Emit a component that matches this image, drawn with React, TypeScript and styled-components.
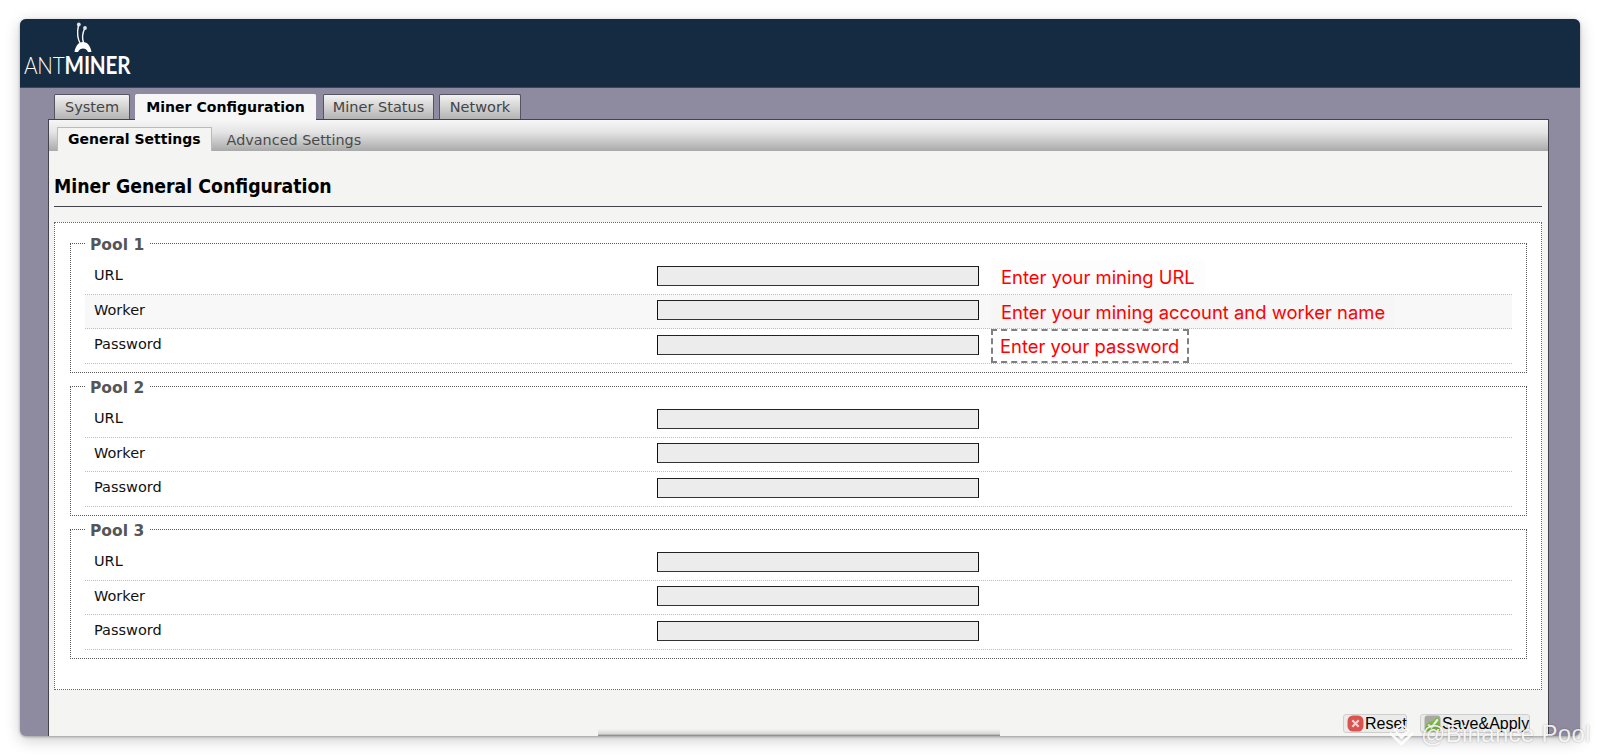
import React from "react";
import styled, { createGlobalStyle } from "styled-components";

const GlobalStyle = createGlobalStyle`
  html, body {
    margin: 0;
    padding: 0;
    background: #ffffff;
  }
  body {
    font-family: "DejaVu Sans", Verdana, sans-serif;
    overflow: hidden;
  }
`;

const Page = styled.div`
  position: relative;
  box-sizing: border-box;
  width: 1600px;
  height: 756px;
  padding: 19px 20px 20px;
`;

const Window = styled.div`
  position: relative;
  display: flex;
  flex-direction: column;
  height: 717px;
  background: #8e8a9f;
  border-radius: 6px;
  overflow: hidden;
  box-shadow: 0 1px 3px rgba(0, 0, 0, 0.3), 0 4px 16px rgba(0, 0, 0, 0.2);
`;

const Header = styled.header`
  display: flex;
  flex-direction: column;
  flex: none;
  box-sizing: border-box;
  height: 69px;
  padding: 3px 0 0 4px;
  background: #152b42;
  border-bottom: 1px solid #3c4654;
`;

const AntIcon = styled.svg`
  display: block;
  width: 18px;
  height: 30px;
  margin-left: 50px;
`;

const LogoText = styled.div`
  margin-top: 0;
  font-family: Lato, sans-serif;
  font-size: 24px;
  line-height: 25px;
  letter-spacing: -0.2px;
  color: #ffffff;
  font-weight: 300;
  transform: scaleX(0.86);
  transform-origin: left center;

  b {
    font-weight: 700;
  }
`;

const Shell = styled.div`
  display: flex;
  flex-direction: column;
  flex: 1;
  min-height: 0;
  padding: 6px 31px 0 28px;
`;

const MainTabs = styled.nav`
  display: flex;
  flex: none;
  align-items: flex-end;
  height: 25px;
  padding-left: 6px;
  gap: 5px;
`;

const MainTab = styled.div<{ $active?: boolean; $width: number }>`
  position: relative;
  box-sizing: border-box;
  width: ${({ $width }) => $width}px;
  height: ${({ $active }) => ($active ? "26px" : "25px")};
  margin-bottom: ${({ $active }) => ($active ? "-1px" : "0")};
  margin-right: ${({ $active }) => ($active ? "2px" : "0")};
  z-index: ${({ $active }) => ($active ? 2 : 0)};
  font-size: ${({ $active }) => ($active ? "14.1px" : "14.5px")};
  line-height: 25px;
  text-align: center;
  font-weight: ${({ $active }) => ($active ? 700 : 400)};
  color: ${({ $active }) => ($active ? "#000000" : "#444444")};
  background: ${({ $active }) =>
    $active ? "#f6f6f6" : "linear-gradient(#f2f2f2, #b4b4b4)"};
  border: 1px solid ${({ $active }) => ($active ? "#f6f6f6" : "#55535f")};
  border-bottom: 0;
  border-radius: 2px 2px 0 0;
`;

const Panel = styled.main`
  position: relative;
  display: flex;
  flex-direction: column;
  flex: 1;
  min-height: 0;
  background: #f4f4f2;
  border: 1px solid #44434c;
  border-bottom: 0;
`;

const SubTabs = styled.div`
  display: flex;
  flex: none;
  align-items: flex-end;
  box-sizing: border-box;
  height: 31px;
  padding-left: 8px;
  background: linear-gradient(#f6f6f6, #e4e4e4 40%, #a9a9a9);
`;

const SubTab = styled.div<{ $active?: boolean }>`
  box-sizing: border-box;
  height: ${({ $active }) => ($active ? "24px" : "22px")};
  padding: 0 ${({ $active }) => ($active ? "10px" : "15px")};
  font-size: ${({ $active }) => ($active ? "14px" : "14.4px")};
  line-height: 23px;
  font-weight: ${({ $active }) => ($active ? 700 : 400)};
  color: ${({ $active }) => ($active ? "#000000" : "#4a4a4a")};
  background: ${({ $active }) => ($active ? "#f4f4f2" : "transparent")};
  border: ${({ $active }) => ($active ? "1px solid #bbbbbb" : "0")};
  border-bottom: 0;
`;

const Title = styled.h2`
  flex: none;
  margin: 23px 6px 0 5px;
  padding-bottom: 6px;
  font-family: "DejaVu Sans", sans-serif;
  font-stretch: condensed;
  font-size: 19.3px;
  line-height: 26px;
  font-weight: 700;
  color: #000000;
  border-bottom: 1px solid #44434c;
`;

const OuterBox = styled.section`
  flex: none;
  box-sizing: border-box;
  height: 468px;
  margin: 15px 6px 0 5px;
  padding: 9px 14px 0 15px;
  background: #ffffff;
  border: 1px dotted #666666;
`;

const Pool = styled.fieldset`
  box-sizing: border-box;
  height: 140.5px;
  margin: 0 0 2.5px;
  padding: 6px 14px 0;
  border: 1px dotted #555555;
`;

const PoolName = styled.legend`
  margin-left: 0;
  padding: 4px 5px 0;
  font-size: 15.5px;
  line-height: 18px;
  font-weight: 700;
  color: #555555;
`;

const Row = styled.div<{ $alt?: boolean }>`
  display: flex;
  align-items: center;
  box-sizing: border-box;
  height: 34.6px;
  background: ${({ $alt }) => ($alt ? "#f8f8f8" : "transparent")};
  border-bottom: 1px dotted #bdbdbd;
`;

const RowLabel = styled.label`
  flex: none;
  box-sizing: border-box;
  width: 572px;
  padding-left: 9px;
  margin-top: -3px;
  font-size: 14.5px;
  color: #111111;
`;

const Field = styled.input`
  flex: none;
  box-sizing: border-box;
  width: 322px;
  height: 20px;
  margin: -2px 0 0;
  padding: 0;
  background: #ececec;
  border: 1px solid #111111;
  border-top-color: #222222;
  border-bottom-color: #333333;
`;

const Hint = styled.span<{ $boxed?: boolean }>`
  display: flex;
  align-items: center;
  align-self: stretch;
  box-sizing: border-box;
  margin-left: 12px;
  padding: ${({ $boxed }) => ($boxed ? "1px 8px 0 7px" : "1px 10px 0")};
  font-family: Inter, "Liberation Sans", Arial, sans-serif;
  font-size: 18.4px;
  color: #ff0000;
  white-space: nowrap;
  background: ${({ $boxed }) => ($boxed ? "transparent" : "rgba(0, 0, 0, 0.008)")};
  border: ${({ $boxed }) => ($boxed ? "2px dashed #808080" : "0")};
`;

const Footer = styled.footer`
  display: flex;
  flex: none;
  justify-content: flex-end;
  gap: 13px;
  margin-top: 24px;
  padding-right: 18px;
`;

const Action = styled.button<{ $width: number }>`
  display: flex;
  align-items: center;
  gap: 1px;
  box-sizing: border-box;
  width: ${({ $width }) => $width}px;
  height: 19px;
  padding: 0 2px 0 3px;
  font-family: "Liberation Sans", Arial, sans-serif;
  font-size: 16px;
  color: #000000;
  background: #ebebe9;
  border: 1px solid #cfcfcf;
  border-radius: 3px;
`;

const ActionIcon = styled.svg`
  display: block;
  flex: none;
  width: 17px;
  height: 17px;
`;

const BottomShade = styled.div`
  position: absolute;
  left: 578px;
  bottom: 0;
  width: 402px;
  height: 7px;
  background: linear-gradient(rgba(0, 0, 0, 0), rgba(0, 0, 0, 0.12) 70%, rgba(0, 0, 0, 0.5));
`;

const Watermark = styled.div`
  position: absolute;
  left: 1388px;
  top: 721px;
  display: flex;
  align-items: center;
  gap: 6px;
  font-family: "Liberation Sans", Arial, sans-serif;
  font-size: 24px;
  line-height: 26px;
  letter-spacing: 0.3px;
  color: rgba(255, 255, 255, 0.88);
  text-shadow: 0 0 2px rgba(0, 0, 0, 0.3);
  white-space: nowrap;
`;

const WatermarkIcon = styled.svg`
  display: block;
  width: 27px;
  height: 24px;
`;

const hints: Record<number, string[]> = {
  0: ["Enter your mining URL", "Enter your mining account and worker name", "Enter your password"],
};

const fields = ["URL", "Worker", "Password"];

export default function App() {
  return (
    <>
      <GlobalStyle />
      <Page>
        <Window>
          <Header>
            <AntIcon viewBox="0 0 18 30" fill="none">
              <path d="M6.500 22C3.500 17 3 10 4.500 3" stroke="#fff" strokeWidth="1.400" />
              <path d="M9.500 21C8 16 8.500 11 10.500 7" stroke="#fff" strokeWidth="1.400" />
              <circle cx="4.800" cy="2.500" r="1.900" fill="#dfe3e8" />
              <circle cx="11" cy="6" r="1.900" fill="#dfe3e8" />
              <path d="M0.500 30C1.500 24 4.500 20 9 20C13.500 20 16.500 24 17.500 30L14 30C13 27.500 11 26.500 9 26.500C7 26.500 5 27.500 4 30Z" fill="#fff" />
            </AntIcon>
            <LogoText>
              ANT<b>MINER</b>
            </LogoText>
          </Header>
          <Shell>
            <MainTabs>
              <MainTab $width={76}>System</MainTab>
              <MainTab $width={181} $active>
                Miner Configuration
              </MainTab>
              <MainTab $width={111}>Miner Status</MainTab>
              <MainTab $width={82}>Network</MainTab>
            </MainTabs>
            <Panel>
              <SubTabs>
                <SubTab $active>General Settings</SubTab>
                <SubTab>Advanced Settings</SubTab>
              </SubTabs>
              <Title>Miner General Configuration</Title>
              <OuterBox>
                {[0, 1, 2].map((pool) => (
                  <Pool key={pool}>
                    <PoolName>Pool {pool + 1}</PoolName>
                    {fields.map((name, i) => (
                      <Row key={name} $alt={pool === 0 && i === 1}>
                        <RowLabel>{name}</RowLabel>
                        <Field type="text" />
                        {hints[pool] && <Hint $boxed={i === 2}>{hints[pool][i]}</Hint>}
                      </Row>
                    ))}
                  </Pool>
                ))}
              </OuterBox>
              <Footer>
                <Action $width={64}>
                  <ActionIcon viewBox="0 0 16 16">
                    <rect x="0.500" y="0.500" width="15" height="15" rx="5" fill="#d9534f" />
                    <path d="M5 5l6 6M11 5l-6 6" stroke="#f6d5d3" strokeWidth="2" />
                  </ActionIcon>
                  Reset
                </Action>
                <Action $width={110}>
                  <ActionIcon viewBox="0 0 16 16">
                    <rect x="0.500" y="0.500" width="15" height="15" rx="3" fill="#a9a9a0" />
                    <path d="M1 14C1 9 4 6 8 6l4-4 3 2v10a1.500 1.500 0 0 1-1.500 1.500h-11Z" fill="#78b648" />
                    <path d="M4 9l3 3 6-8" stroke="#e6f3d8" strokeWidth="2" fill="none" />
                  </ActionIcon>
                  Save&amp;Apply
                </Action>
              </Footer>
            </Panel>
          </Shell>
          <BottomShade />
        </Window>
        <Watermark>
          <WatermarkIcon viewBox="0 0 27 24" fill="none" stroke="rgba(255,255,255,0.9)" strokeWidth="2.500">
            <path d="M6 9l7.500-7 7.500 7" strokeWidth="2" />
            <path d="M2 11l11.500 11L25 11" />
            <path d="M8 10l5.500 5.500L19 10" />
          </WatermarkIcon>
          @Binance Pool
        </Watermark>
      </Page>
    </>
  );
}
